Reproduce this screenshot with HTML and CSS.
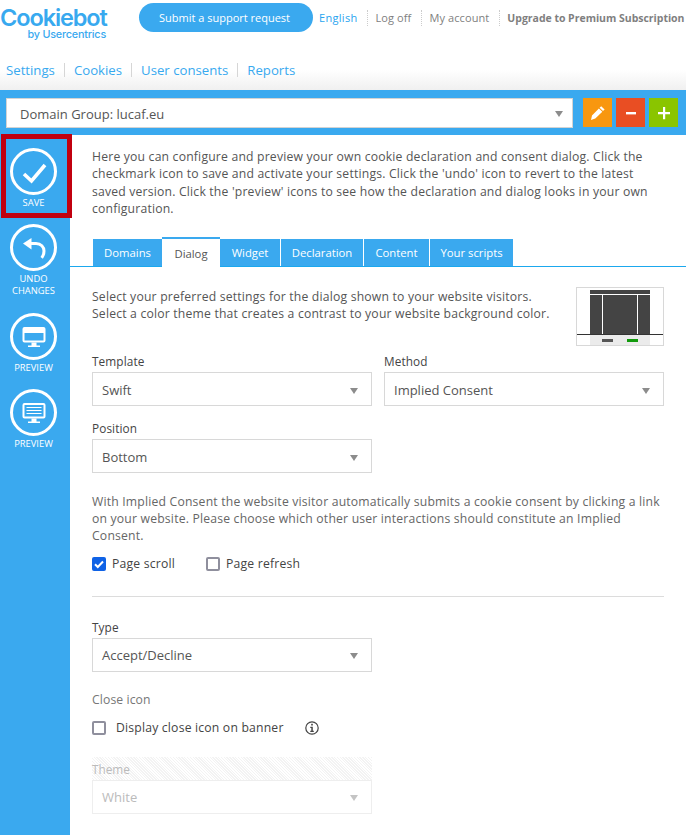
FILE: index.html
```html
<!DOCTYPE html>
<html lang="en">
<head>
<meta charset="utf-8">
<title>Cookiebot</title>
<link rel="stylesheet" href="styles.css">
</head>
<body>
<header class="header">
  <div class="topline">
    <div class="logo"><div class="logo-main">Cookiebot</div><div class="logo-sub">by Usercentrics</div></div>
    <a class="support">Submit a support request</a>
    <nav class="utility">
      <a class="lang">English</a><a>Log off</a><a>My account</a><a class="upgrade">Upgrade to Premium Subscription</a>
    </nav>
  </div>
  <nav class="mainnav"><a>Settings</a><a>Cookies</a><a>User consents</a><a>Reports</a></nav>
</header>
<div class="domainbar">
  <div class="domain-select"><span>Domain Group: lucaf.eu</span><i class="arrow"></i></div>
  <div class="actions">
    <button class="act orange"><svg viewBox="0 0 16 16" width="16" height="16"><path fill="#fff" d="M11.200 1.200l3.400 3.200-1.600 1.700-3.400-3.300zM8.900 3.400l3.400 3.300-7 6.900-4.300 1.400 1-4.600zM2.600 11.800l1.500 1.500-1.900.6z"/></svg></button>
    <button class="act red"><svg viewBox="0 0 16 16" width="16" height="16"><rect x="3" y="7" width="10" height="2.400" fill="#fff"/></svg></button>
    <button class="act green"><svg viewBox="0 0 16 16" width="16" height="16"><path fill="#fff" d="M7 2h2.200v5H14v2.200H9.200v5H7v-5H2V7h5z"/></svg></button>
  </div>
</div>
<div class="layout">
  <aside class="sidebar">
    <div class="tool save">
      <span class="circle"><svg viewBox="0 0 44 44" width="44" height="44"><path d="M12 24l7.500 7L33 15" fill="none" stroke="#fff" stroke-width="3.600"/></svg></span>
      <span class="tool-label">SAVE</span>
    </div>
    <div class="tool undo">
      <span class="circle"><svg viewBox="0 0 44 44" width="44" height="44"><path d="M17 17.500h7c5 0 8 3.500 8 7.500 0 2.500-.8 4.800-2.300 6.800" fill="none" stroke="#fff" stroke-width="3"/><path d="M19.500 12v11.500L11 17.500z" fill="#fff"/></svg></span>
      <span class="tool-label">UNDO<br>CHANGES</span>
    </div>
    <div class="tool">
      <span class="circle"><svg viewBox="0 0 44 44" width="44" height="44"><rect x="11.500" y="13" width="21" height="13.500" rx="1" fill="none" stroke="#fff" stroke-width="2"/><rect x="11.500" y="13" width="21" height="5" fill="#fff"/><path d="M19.500 27.500h5v3h3.500V32H16v-1.500h3.500z" fill="#fff"/></svg></span>
      <span class="tool-label">PREVIEW</span>
    </div>
    <div class="tool">
      <span class="circle"><svg viewBox="0 0 44 44" width="44" height="44"><rect x="11.500" y="13" width="21" height="13.500" rx="1" fill="none" stroke="#fff" stroke-width="2"/><path d="M14.500 16.500h15M14.500 19.500h15M14.500 22.500h15" stroke="#fff" stroke-width="1.200"/><path d="M19.500 27.500h5v3h3.500V32H16v-1.500h3.500z" fill="#fff"/></svg></span>
      <span class="tool-label">PREVIEW</span>
    </div>
  </aside>
  <main class="content">
    <p class="intro">Here you can configure and preview your own cookie declaration and consent dialog. Click the checkmark icon to save and activate your settings. Click the 'undo' icon to revert to the latest saved version. Click the 'preview' icons to see how the declaration and dialog looks in your own configuration.</p>
    <div class="tabs">
      <a class="tab">Domains</a><a class="tab active">Dialog</a><a class="tab">Widget</a><a class="tab">Declaration</a><a class="tab">Content</a><a class="tab">Your scripts</a>
    </div>
    <div class="panel">
      <div class="desc-row">
        <p class="desc">Select your preferred settings for the dialog shown to your website visitors.<br>Select a color theme that creates a contrast to your website background color.</p>
        <div class="thumb">
          <div class="thumb-page">
            <div class="thumb-top"></div>
            <div class="thumb-cols"><span class="c1"></span><span class="c2"></span><span class="c3"></span></div>
            <div class="thumb-foot"><span class="b1"></span><span class="b2"></span></div>
          </div>
        </div>
      </div>
      <div class="field-row">
        <div class="field"><label>Template</label><div class="select"><span>Swift</span><i class="arrow"></i></div></div>
        <div class="field"><label>Method</label><div class="select"><span>Implied Consent</span><i class="arrow"></i></div></div>
      </div>
      <div class="field-row pos">
        <div class="field"><label>Position</label><div class="select"><span>Bottom</span><i class="arrow"></i></div></div>
      </div>
      <p class="implied">With Implied Consent the website visitor automatically submits a cookie consent by clicking a link on your website. Please choose which other user interactions should constitute an Implied Consent.</p>
      <div class="checks">
        <span class="check"><i class="box on"><svg viewBox="0 0 14 14" width="14" height="14"><path d="M3 7.200l2.800 2.800L11 4.500" fill="none" stroke="#fff" stroke-width="2"/></svg></i>Page scroll</span>
        <span class="check"><i class="box"></i>Page refresh</span>
      </div>
      <hr class="rule">
      <div class="field-row type">
        <div class="field"><label>Type</label><div class="select"><span>Accept/Decline</span><i class="arrow"></i></div></div>
      </div>
      <div class="close-title">Close icon</div>
      <div class="close-row">
        <i class="box"></i><span class="close-text">Display close icon on banner</span>
        <svg class="info" viewBox="0 0 14 14" width="14" height="14"><circle cx="7" cy="7" r="6.200" fill="none" stroke="#444" stroke-width="1.200"/><rect x="6.200" y="2.800" width="1.600" height="1.700" fill="#444"/><path d="M5.300 5.800h2.500v4h1v1.200H5.300V9.800h1V7H5.300z" fill="#444"/></svg>
      </div>
      <div class="theme">
        <label>Theme</label>
        <div class="select disabled"><span>White</span><i class="arrow"></i></div>
      </div>
    </div>
  </main>
</div>
</body>
</html>
```
FILE: styles.css
```css
*, *::before { box-sizing: border-box; }
html, body { margin: 0; padding: 0; height: 835px; overflow: hidden; }
body { background: #fff; font-family: "Open Sans", "Noto Sans", sans-serif; font-size: 12px; color: #555; }
a { text-decoration: none; color: inherit; }
p { margin: 0; }

.header { height: 90px; background: linear-gradient(#fff 0, #fff 70px, #f0f0f0 90px); }
.topline { display: flex; align-items: flex-start; height: 53px; }
.logo { width: 139px; color: #38a9ef; padding-right: 33px; flex: none; text-align: right; }
.logo-main { font-family: "Inter", "Liberation Sans", sans-serif; font-weight: 600; font-size: 23.500px; line-height: 20px; letter-spacing: -1.100px; margin-top: 8px; padding-right: 1px; white-space: nowrap; }
.logo-sub { font-family: "Inter", "Liberation Sans", sans-serif; font-weight: 500; font-size: 10.800px; line-height: 13px; letter-spacing: -.2px; white-space: nowrap; }
.support { flex: none; width: 174px; height: 29px; margin-top: 3px; border-radius: 15px; background: #3aa9ef; color: #fff; text-align: center; line-height: 29px; font-size: 11px; padding-right: 3px; }
.utility { display: flex; margin-top: 10px; line-height: 16px; font-size: 11px; color: #808080; white-space: nowrap; margin-left: 6px; }
.utility a { padding: 0 10px 0 7px; border-left: 1px dotted #ccc; letter-spacing: .1px; }
.utility .lang { color: #2aa4ef; border-left: 0; padding-left: 0; letter-spacing: .3px; }
.utility .upgrade { font-weight: 700; font-size: 10.500px; letter-spacing: -.02px; padding-right: 0; color: #7f7f7f; }
.mainnav { display: flex; padding-left: 6px; color: #38a9ef; font-size: 13.200px; margin-top: 10px; }
.mainnav a { padding: 0 9px; border-left: 1px solid #d6d6d6; height: 14px; line-height: 14px; }
.mainnav a:first-child { padding-left: 0; border-left: 0; }

.domainbar { height: 45px; background: #3aa9ef; display: flex; padding: 8px 6px 0; }
.domain-select { width: 567px; height: 30px; background: #fff; border: 1px solid #d3d3d3; display: flex; align-items: center; justify-content: space-between; padding: 1px 9px 0 13px; font-size: 13px; color: #555; }
.actions { display: flex; gap: 4px; margin-left: 10px; }
.act { width: 29px; height: 29px; border: 0; padding: 0; display: flex; align-items: center; justify-content: center; }
.orange { background: #f8970f; }
.red { background: #e94e23; }
.green { background: #8ac500; }

.arrow { display: block; width: 0; height: 0; border-left: 4px solid transparent; border-right: 4px solid transparent; border-top: 6px solid #8c8c8c; flex: none; }

.layout { display: flex; height: 700px; }
.sidebar { width: 70px; background: #3aa9ef; flex: none; padding-top: 13px; position: relative; }
.sidebar::before { content: ""; position: absolute; left: 1px; top: -1px; width: 71px; height: 84px; border: 5px solid #c1000f; }
.tool { width: 67px; display: flex; flex-direction: column; align-items: center; color: #fff; font-size: 9.400px; line-height: 12px; text-align: center; height: 76px; position: relative; }
.tool.undo { height: 89px; }
.circle { width: 47px; height: 47px; border: 3px solid #fff; border-radius: 50%; display: flex; align-items: center; justify-content: center; flex: none; }
.circle svg { flex: none; margin: -1.500px; }
.tool-label { margin-top: 2px; }

.content { flex: 1; min-width: 0; }
.intro { padding: 13px 26px 0 22px; font-size: 12.200px; letter-spacing: .19px; line-height: 17.300px; color: #555; height: 102px; }
.tabs { display: grid; grid-template-columns: 69px 58px 61px 83px 66px 83px; height: 30px; border-bottom: 1px solid #1ba8ee; padding-left: 23px; align-items: end; }
.tab { height: 27px; line-height: 27px; background: #3aa9ef; color: #fff; font-size: 11.300px; border-right: 1px solid #fff; white-space: nowrap; text-align: center; }
.tab:first-child { border-right: 0; }
.tab.active { height: 30px; line-height: 30px; background: #fff; color: #555; border-top: 2px solid #3aa9ef; border-right: 0; margin-bottom: -1px; }
.tab:nth-child(6) { border-right: 0; }
.panel { padding: 0 22px; }
.desc-row { display: flex; justify-content: space-between; height: 88px; padding-top: 20px; }
.desc { font-size: 12.200px; letter-spacing: .19px; line-height: 17px; color: #555; white-space: nowrap; margin-top: 1px; }
.thumb { width: 88px; height: 59px; border: 1px solid #d8d8d8; flex: none; position: relative; }
.thumb-page { position: absolute; left: 13px; top: 2px; width: 60px; height: 55px; display: flex; flex-direction: column; }
.thumb-top { height: 4px; background: #444; }
.thumb-cols { display: flex; gap: 1px; height: 39px; margin-top: 1px; }
.c1, .c3 { background: #444; width: 12px; }
.c2 { background: #444; flex: 1; }
.thumb-foot { height: 11px; border-top: 1px solid #333; margin: 0 -13px; display: flex; justify-content: center; gap: 14px; padding-top: 4px; background: linear-gradient(#ebebeb, #ebebeb) center / 60px 100% no-repeat; }
.b1, .b2 { width: 11px; height: 3px; }
.b1 { background: #555; }
.b2 { background: #129a0c; }

.field-row { display: flex; gap: 12px; height: 67px; }
.field { width: 280px; }
.field label { display: block; font-size: 11.800px; letter-spacing: .1px; line-height: 18px; color: #444; height: 20px; margin-top: -3px; }
.select { height: 34px; width: 280px; border: 1px solid #d8d8d8; background: #fff; display: flex; align-items: center; justify-content: space-between; padding: 1px 13px 0 9px; font-size: 13px; color: #555; }
.select .arrow { margin-top: 2px; }
.field-row.pos { height: 71px; }
.implied { font-size: 12.200px; letter-spacing: .19px; line-height: 17.200px; color: #666; width: 572px; }
.checks { display: flex; gap: 31px; margin-top: 11px; height: 16px; align-items: center; font-size: 12.200px; letter-spacing: .2px; color: #444; }
.check { display: flex; align-items: center; gap: 6px; }
.box { display: block; width: 14px; height: 14px; border: 2px solid #8f8f9d; border-radius: 2px; background: #fff; flex: none; }
.box.on { background: #0f62e6; border: 0; }
.box.on svg { display: block; }
.rule { border: 0; border-top: 1px solid #dcdcdc; margin: 24px 0 0; }
.field-row.type { margin-top: 24px; height: 70px; }
.close-title { font-size: 12.200px; letter-spacing: .1px; line-height: 18px; color: #777; }
.close-row { display: flex; align-items: center; margin-top: 9px; height: 20px; font-size: 12.200px; letter-spacing: .19px; color: #444; }
.close-text { margin-left: 10px; }
.info { margin-left: 21px; }
.theme { margin-top: 19px; width: 280px; }
.theme label { display: block; font-size: 11.800px; color: #bbb; height: 23px; line-height: 24px; background: repeating-linear-gradient(45deg, #fff 0, #fff 1px, #f3f3f3 1px, #f3f3f3 2px); }
.select.disabled { color: #bbb; border-color: #eee; }
.select.disabled .arrow { border-top-color: #c4c4c4; }
```
